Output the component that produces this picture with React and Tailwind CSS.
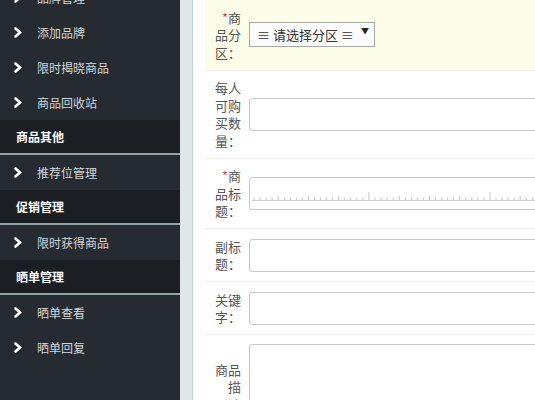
import React from "react";

function Chevron() {
  return (
    <svg width="8" height="11" viewBox="0 0 8 11" className="shrink-0">
      <polyline points="1.5,1.5 6,5.5 1.5,9.5" fill="none" stroke="#ffffff" strokeWidth="2.6" strokeLinecap="square" strokeLinejoin="miter" />
    </svg>
  );
}

function Item({ text }) {
  return (
    <div className="h-[35px] flex items-center bg-[#262b31]">
      <div className="w-[37px] pl-[14px] flex items-center">
        <Chevron />
      </div>
      <span className="text-[12px] text-[#d2d6d9]">{text}</span>
    </div>
  );
}

function Header({ text }) {
  return (
    <div className="h-[35px] flex items-center bg-[#1b1e23] border-b-2 border-[#95a3a7] pl-[16px]">
      <span className="text-[12px] font-bold text-white">{text}</span>
    </div>
  );
}

function Label({ lines }) {
  return (
    <div className="w-[28px] shrink-0 text-right text-[13px] leading-[17.5px] text-[#555]">
      {lines.map((l, i) => (
        <div key={i}>{l}</div>
      ))}
    </div>
  );
}

function Row({ children, yellow }) {
  return (
    <div
      className={
        "flex items-center gap-[8px] pl-[8px] py-[8.5px] border-b border-[#f0f0f0] " +
        (yellow ? "bg-[#fcfde8]" : "bg-white")
      }
    >
      {children}
    </div>
  );
}

function Input({ children }) {
  return (
    <div className="relative w-[420px] h-[33px] shrink-0 border border-[#c8c8c8] rounded-[3px] bg-white overflow-hidden">
      {children}
    </div>
  );
}

function Ruler() {
  const ticks = [];
  for (let i = 0; i < 70; i++) {
    const x = 4 + i * 6.05;
    const big = i % 20 === 19;
    const mid = i % 5 === 4;
    const h = big ? 8 : mid ? 4 : 2.5;
    ticks.push(<line key={i} x1={x} x2={x} y1={22 - h} y2={22} stroke="#c4c4c4" strokeWidth="1" />);
  }
  return (
    <svg className="absolute left-0 top-0" width="420" height="33">
      <line x1="2" x2="420" y1="22.5" y2="22.5" stroke="#d0d0d0" strokeWidth="1" />
      {ticks}
    </svg>
  );
}

export default function App() {
  return (
    <div className="w-[535px] h-[400px] overflow-hidden flex bg-white [font-family:'Noto_Sans_CJK_SC','Noto_Sans',sans-serif]">
      <div className="w-[180px] shrink-0 bg-[#262b31] h-full">
        <div className="-mt-[20px]">
          <Item text="品牌管理" />
          <Item text="添加品牌" />
          <Item text="限时揭晓商品" />
          <Item text="商品回收站" />
          <Header text="商品其他" />
          <Item text="推荐位管理" />
          <Header text="促销管理" />
          <Item text="限时获得商品" />
          <Header text="晒单管理" />
          <Item text="晒单查看" />
          <Item text="晒单回复" />
        </div>
      </div>
      <div className="w-[13px] shrink-0 bg-[#dfe7eb] border-r border-[#c9d2d6] h-full" />
      <div className="flex-1 pl-[12px] min-w-0">
        <div className="w-[420px]">
          <Row yellow>
            <Label lines={[<><span className="text-[#d04a4a]">*</span>商</>, "品分", "区："]} />
            <div className="relative w-[126px] h-[25px] shrink-0 border border-[#a8a8a8] bg-[#fbfbfb] flex items-center pl-[7px] text-[13px] text-[#333]">
              <span>≡ 请选择分区 ≡</span>
              <span className="absolute right-[5px] top-[4px] text-[8px] leading-none text-[#222]">▼</span>
            </div>
          </Row>
          <Row>
            <Label lines={["每人", "可购", "买数", "量："]} />
            <Input />
          </Row>
          <Row>
            <Label lines={[<><span className="text-[#d04a4a]">*</span>商</>, "品标", "题："]} />
            <Input>
              <Ruler />
            </Input>
          </Row>
          <Row>
            <Label lines={["副标", "题："]} />
            <Input />
          </Row>
          <Row>
            <Label lines={["关键", "字："]} />
            <Input />
          </Row>
          <div className="flex items-center gap-[8px] pl-[8px] pt-[9px] bg-white">
            <Label lines={["商品", "描", "述"]} />
            <div className="w-[420px] h-[86px] shrink-0 border border-[#c8c8c8] rounded-[3px] bg-white" />
          </div>
        </div>
      </div>
    </div>
  );
}
